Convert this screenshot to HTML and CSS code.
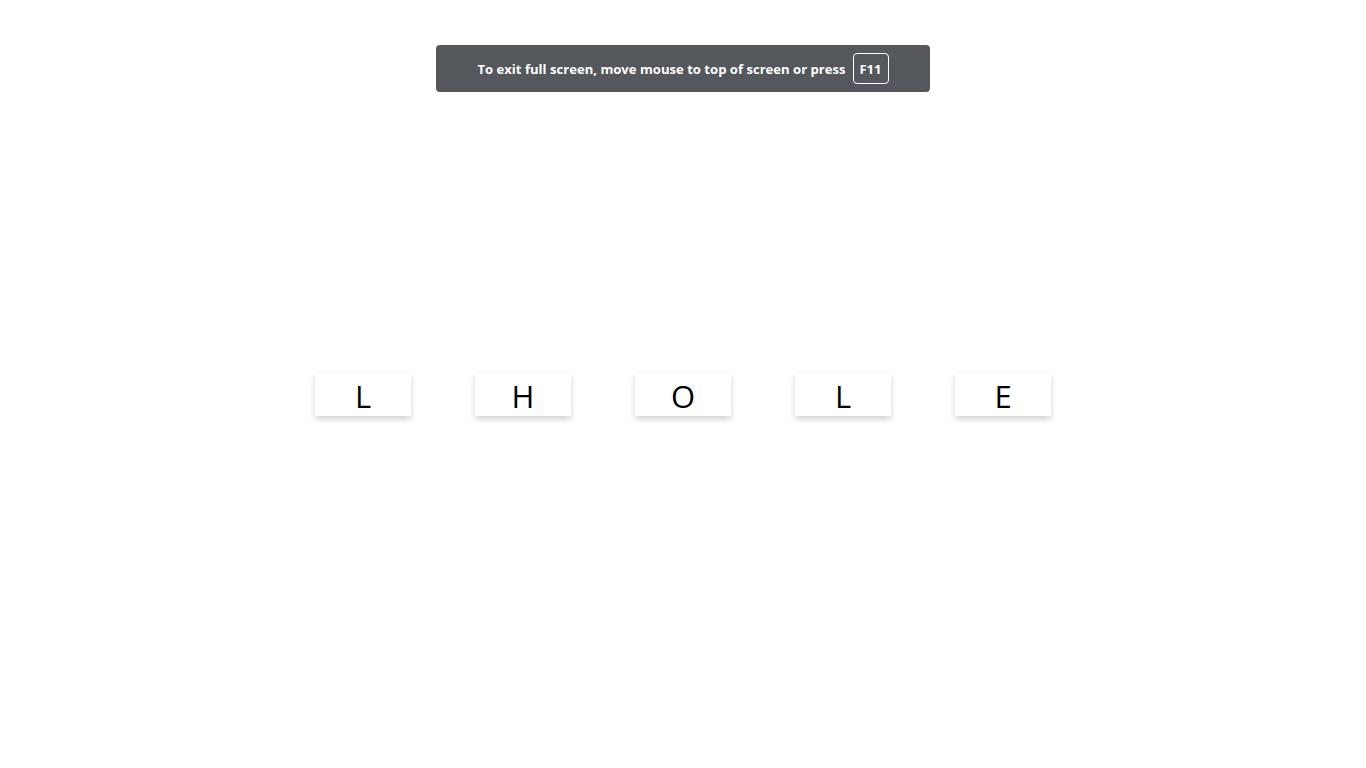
FILE: index.html
```html
<!DOCTYPE html>
<html lang="en">
<head>
<meta charset="utf-8">
<title>Letters</title>
<link rel="stylesheet" href="styles.css">
</head>
<body>
<div class="fs-toast">
  <span class="fs-text">To exit full screen, move mouse to top of screen or press</span>
  <span class="fs-key">F11</span>
</div>
<main class="board">
  <div class="tile">L</div>
  <div class="tile">H</div>
  <div class="tile">O</div>
  <div class="tile">L</div>
  <div class="tile">E</div>
</main>
</body>
</html>
```

FILE: styles.css
```css
html, body {
  margin: 0;
  padding: 0;
  background: #ffffff;
}
body {
  width: 1366px;
  height: 768px;
  overflow: hidden;
  font-family: "Open Sans", "Noto Sans", "DejaVu Sans", sans-serif;
}
.fs-toast {
  position: absolute;
  left: 436px;
  top: 45px;
  width: 494px;
  height: 47px;
  box-sizing: border-box;
  background: #54575b;
  border-radius: 4px;
  display: flex;
  align-items: center;
  justify-content: center;
  gap: 7px;
  color: #ffffff;
  font-size: 13.1px;
  font-weight: 700;
}
.fs-key {
  display: flex;
  align-items: center;
  justify-content: center;
  width: 36px;
  height: 31px;
  box-sizing: border-box;
  border: 1px solid #ffffff;
  border-radius: 4px;
  font-size: 13.1px;
}
.board {
  display: flex;
  justify-content: center;
  gap: 64px;
  padding-top: 373px;
}
.tile {
  width: 96px;
  height: 43px;
  background: #ffffff;
  box-shadow: 0 3px 6px rgba(0, 0, 0, 0.18);
  display: flex;
  align-items: center;
  justify-content: center;
  font-size: 31px;
  line-height: 1;
  color: #000000;
  padding-top: 4px;
  box-sizing: border-box;
}
```
